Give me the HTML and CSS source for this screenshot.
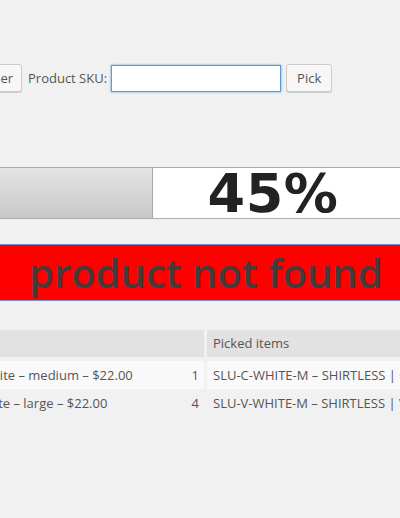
FILE: index.html
```html
<!DOCTYPE html>
<html lang="en">
<head>
<meta charset="utf-8">
<title>Pick order</title>
<link rel="stylesheet" href="styles.css">
</head>
<body>
<div class="page">
  <form class="pick-form">
    <button type="button" class="btn btn-order">Order</button>
    <label class="sku-label" for="sku">Product SKU:</label>
    <input id="sku" class="sku-input" type="text">
    <button type="button" class="btn btn-pick">Pick</button>
  </form>

  <div class="progress">
    <div class="progress-fill" style="width:161px"></div>
    <div class="progress-label">45%</div>
  </div>

  <div class="status">product not found</div>

  <div class="items">
    <div class="items-row items-head">
      <div class="cell">Product</div>
      <div class="cell">Picked items</div>
    </div>
    <div class="items-row items-odd">
      <div class="cell name-cell"><span class="name">SHIRTLESS | Crew – white – medium – $22.00</span><span class="qty">1</span></div>
      <div class="cell">SLU-C-WHITE-M – SHIRTLESS | Crew – white – medium</div>
    </div>
    <div class="items-row">
      <div class="cell name-cell"><span class="name">SHIRTLESS | Vest – white – large – $22.00</span><span class="qty">4</span></div>
      <div class="cell">SLU-V-WHITE-M – SHIRTLESS | Vest – white – medium</div>
    </div>
  </div>
</div>
</body>
</html>
```

FILE: styles.css
```css
html, body {
  margin: 0;
  padding: 0;
}

body {
  background: #f1f1f1;
  color: #555;
  font-family: "Open Sans", "Liberation Sans", sans-serif;
  font-size: 13px;
  overflow: hidden;
}

.page {
  padding-top: 64px;
}

.pick-form {
  display: flex;
  align-items: center;
  margin: 0 0 0 -32px;
}

.btn {
  box-sizing: border-box;
  height: 28px;
  padding: 0 8px 1px;
  border: 1px solid #cccccc;
  border-radius: 3px;
  background: #f7f7f7;
  box-shadow: 0 1px 0 #cccccc;
  color: #555;
  font-family: "Open Sans", "Liberation Sans", sans-serif;
  font-size: 13px;
  line-height: 26px;
  white-space: nowrap;
}

.btn-pick {
  margin-left: 5px;
  padding: 0 10px 1px;
}

.sku-label {
  margin-left: 6px;
  color: #555;
}

.sku-input {
  box-sizing: border-box;
  width: 170px;
  height: 27px;
  margin: 0 0 0 4px;
  border: 1px solid #5b9dd9;
  background: #fff;
  box-shadow: 0 0 2px rgba(30, 140, 190, 0.8);
  font-family: "Open Sans", "Liberation Sans", sans-serif;
  font-size: 13px;
  outline: none;
}

.progress {
  box-sizing: border-box;
  display: flex;
  width: 420px;
  height: 52px;
  margin: 75px 0 0 -10px;
  border: 1px solid #aaaaaa;
  background: #fff;
}

.progress-fill {
  flex: none;
  border-right: 1px solid #a8a8a8;
  background: linear-gradient(to bottom, #e4e4e4, #c8c8c8);
}

.progress-label {
  flex: 1;
  padding-right: 16px;
  color: #222;
  font-family: "DejaVu Sans", Verdana, sans-serif;
  font-size: 54px;
  font-weight: bold;
  letter-spacing: 0.5px;
  line-height: 52px;
  text-align: center;
}

.status {
  box-sizing: border-box;
  width: 420px;
  height: 57px;
  margin: 25px 0 0 -10px;
  padding-left: 39px;
  border-top: 1px solid #7b8fcf;
  border-bottom: 1px solid #7b8fcf;
  background: #ff0000;
  color: #443c3c;
  font-size: 40px;
  font-weight: 600;
  line-height: 55px;
  white-space: nowrap;
}

.items {
  display: flex;
  flex-direction: column;
  margin: 29px 0 0 -148px;
  width: 660px;
}

.items-row {
  display: grid;
  grid-template-columns: 352px 1fr;
  column-gap: 3px;
  height: 28px;
  line-height: 29px;
}

.items-head {
  height: 27px;
  line-height: 27px;
  margin-bottom: 4px;
}

.items-head .cell {
  background: #e2e2e2;
}

.items-odd .cell {
  background: #f9f9f9;
}

.cell {
  padding: 0 6px;
  white-space: nowrap;
  overflow: hidden;
}

.name-cell {
  display: flex;
  justify-content: space-between;
  padding: 0 5px 0 8px;
}
```
